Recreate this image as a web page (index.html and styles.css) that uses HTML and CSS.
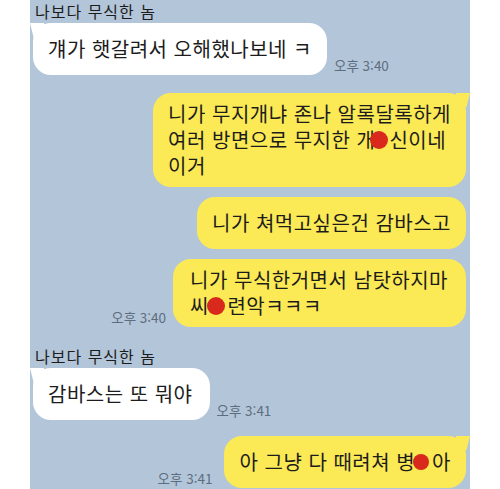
FILE: index.html
```html
<!DOCTYPE html>
<html lang="ko">
<head>
    <meta charset="UTF-8">
    <meta name="viewport" content="width=device-width, initial-scale=1.0">
    <title>Chat</title>
    <link rel="stylesheet" href="styles.css">
</head>
<body>
    <div class="chat">
        <!-- first friend message -->
        <div class="group in">
            <div class="name">나보다 무식한 놈</div>
            <div class="row">
                <div class="bubble white tail one">걔가 햇갈려서 오해했나보네 ㅋ</div>
                <span class="time">오후 3:40</span>
            </div>
        </div>

        <!-- my messages -->
        <div class="group out first-out">
            <div class="row">
                <div class="bubble yellow tail">니가 무지개냐 존나 알록달록하게<br>여러 방면으로 무지한 개<span class="dot d1"></span>신이네<br>이거</div>
            </div>
            <div class="row">
                <div class="bubble yellow one">니가 쳐먹고싶은건 감바스고</div>
            </div>
            <div class="row">
                <span class="time">오후 3:40</span>
                <div class="bubble yellow wide">니가 무식한거면서 남탓하지마<br>씨<span class="dot d2"></span>련악ㅋㅋㅋ</div>
            </div>
        </div>

        <div class="group in second-in">
            <div class="name">나보다 무식한 놈</div>
            <div class="row">
                <div class="bubble white tail one short">감바스는 또 뭐야</div>
                <span class="time">오후 3:41</span>
            </div>
        </div>

        <div class="group out last-out">
            <div class="row">
                <span class="time t-last">오후 3:41</span>
                <div class="bubble yellow tail one">아 그냥 다 때려쳐 병<span class="dot d3"></span>아</div>
            </div>
        </div>
    </div>
</body>
</html>
```

FILE: styles.css
```css
/* kakao style chat capture */
body {
    margin: 0;
    background: #fff;
    font-family: "Noto Sans CJK KR", "Noto Sans", sans-serif;
    color: #1c1c1c;
}
.chat {
    margin-left: 30px;
    width: 440px;
    height: 489px;
    overflow: hidden;
    background-color: #b3c5d8;
    padding: 0 4px 0 3px;
    box-sizing: border-box;
}
.group {
    display: flex;
    flex-direction: column;
}
.group.in {
    align-items: flex-start;
}
.group.out {
    align-items: flex-end;
}
.name {
    font-size: 16px;
    letter-spacing: 1px;
    line-height: 23px;
    padding-left: 2px;
}
.row {
    display: flex;
    align-items: flex-end;
    gap: 7px;
}
.group.out .row + .row {
    margin-top: 10px;
}
.bubble {
    position: relative;
    font-size: 20px;
    letter-spacing: 0.5px;
    line-height: 26px;
    padding: 8px 15px;
    border-radius: 18px;
}
.bubble.one {
    padding-top: 13px;
    padding-bottom: 13px;
}
.bubble.wide {
    padding-left: 17px;
    padding-right: 18px;
}
.bubble.short {
    padding-right: 17px;
}
.white {
    background: #fff;
}
.yellow {
    background: #fbe955;
}
/* little pointed corner */
.tail::before {
    content: "";
    position: absolute;
    top: 0;
    width: 14px;
    height: 14px;
}
.white.tail::before {
    left: -3px;
    background: #fff;
    clip-path: polygon(0 0, 100% 0, 100% 100%, 25% 100%);
}
.yellow.tail::before {
    right: -4px;
    background: #fbe955;
    clip-path: polygon(0 0, 100% 0, 75% 100%, 0 100%);
}
.time {
    font-size: 13.5px;
    line-height: 16px;
    color: #5d6d80;
    white-space: nowrap;
    margin-bottom: 2px;
}
.t-last {
    margin-right: 5px;
}
.first-out {
    margin-top: 18px;
}
.second-in {
    margin-top: 18px;
}
.last-out {
    margin-top: 16px;
}
.dot {
    display: inline-block;
    width: 0.92em;
    height: 1em;
    position: relative;
    vertical-align: -3px;
}
.dot::after {
    content: "";
    position: absolute;
    width: 18px;
    height: 18px;
    border-radius: 50%;
    background: #d8291c;
    left: -2px;
    top: 0;
}
.d1 {
    width: 14px;
}
.d1::after {
    left: -5px;
}
.d3 {
    width: 17px;
}
.d3::after {
    width: 16px;
    height: 16px;
    top: 1px;
}
```
